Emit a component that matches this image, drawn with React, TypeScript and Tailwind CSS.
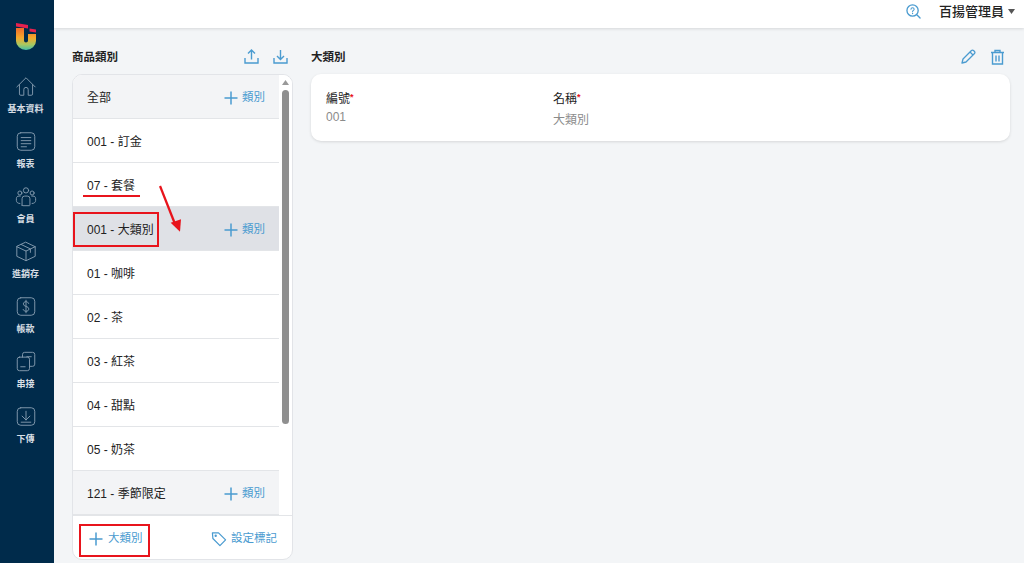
import React from "react";

const font = { fontFamily: '"Liberation Sans","Noto Sans CJK TC",sans-serif' };

function Ico({ children, size = 26, className = "" }: { children: React.ReactNode; size?: number; className?: string }) {
  return (
    <svg width={size} height={size} viewBox="0 0 24 24" fill="none" stroke="currentColor" strokeWidth={1.1} strokeLinecap="round" strokeLinejoin="round" className={className}>
      {children}
    </svg>
  );
}

const nav: { label: string; icon: React.ReactNode }[] = [
  {
    label: "基本資料",
    icon: (
      <>
        <path d="M1.5 12.5 12 2l10.5 10.5" />
        <path d="M4.5 10v10.5a1.5 1.5 0 0 0 1.5 1.5h3.5v-6.5a2.5 2.5 0 0 1 5 0V22H18a1.5 1.5 0 0 0 1.5-1.5V10" />
      </>
    ),
  },
  {
    label: "報表",
    icon: (
      <>
        <rect x="2" y="2" width="20" height="20" rx="4" />
        <path d="M6.5 7.5h11M6.5 11h11M6.5 14.5h11M6.5 18h6" />
      </>
    ),
  },
  {
    label: "會員",
    icon: (
      <>
        <circle cx="12" cy="5" r="3" />
        <circle cx="5" cy="8" r="2.3" />
        <circle cx="19" cy="8" r="2.3" />
        <path d="M7.5 22v-7.5a3 3 0 0 1 3-3h3a3 3 0 0 1 3 3V22a1 1 0 0 1-1 .5h-7a1 1 0 0 1-1-.5Z" />
        <path d="M5 20c-2.5 0-4-1.5-4-3.5v-2c0-1.800 1-3 3-3h1.500M19 20c2.500 0 4-1.500 4-3.500v-2c0-1.800-1-3-3-3h-1.500" />
      </>
    ),
  },
  {
    label: "進銷存",
    icon: (
      <>
        <path d="M12 1.500 22.500 6.500v11L12 22.500 1.500 17.500v-11Z" />
        <path d="M1.500 6.500 12 11.500l10.500-5M12 11.500v11M6.500 4 17 9v4" />
      </>
    ),
  },
  {
    label: "帳款",
    icon: (
      <>
        <rect x="2" y="2" width="20" height="20" rx="4" />
        <path d="M15 8.500c-.5-1.300-1.600-2-3-2-1.800 0-3 1-3 2.600 0 3.600 6.200 2 6.200 5.600 0 1.700-1.300 2.800-3.200 2.800-1.500 0-2.700-.8-3.200-2.100M12 4.800v14.400" />
      </>
    ),
  },
  {
    label: "串接",
    icon: (
      <>
        <path d="M8 7V4a2.500 2.500 0 0 1 2.500-2.500h9A2.500 2.500 0 0 1 22 4v11a2.500 2.500 0 0 1-2.500 2.500H16" />
        <path d="M13 6.500h5M6 18h5" />
        <rect x="2" y="7" width="14" height="15.500" rx="2.500" />
      </>
    ),
  },
  {
    label: "下傳",
    icon: (
      <>
        <rect x="2" y="2" width="20" height="20" rx="4" />
        <path d="M12 6v10M7.500 11.500 12 16l4.500-4.500M6.500 18.500h11" />
      </>
    ),
  },
];

const rows: { t: string; shade?: "soft" | "sel"; add?: boolean }[] = [
  { t: "全部", shade: "soft", add: true },
  { t: "001 - 訂金" },
  { t: "07 - 套餐" },
  { t: "001 - 大類別", shade: "sel", add: true },
  { t: "01 - 咖啡" },
  { t: "02 - 茶" },
  { t: "03 - 紅茶" },
  { t: "04 - 甜點" },
  { t: "05 - 奶茶" },
  { t: "121 - 季節限定", shade: "soft", add: true },
];

function Plus({ size = 14 }: { size?: number }) {
  return (
    <svg width={size} height={size} viewBox="0 0 14 14" fill="none" stroke="currentColor" strokeWidth={1.5}>
      <path d="M7 0.500v13M0.500 7h13" />
    </svg>
  );
}

function Logo() {
  return (
    <svg width="20" height="27" viewBox="0 0 20 27">
      <defs>
        <linearGradient id="lg" x1="0" y1="0" x2="0" y2="1">
          <stop offset="0" stopColor="#f06a2a" />
          <stop offset="0.45" stopColor="#f4a92c" />
          <stop offset="0.75" stopColor="#a8c860" />
          <stop offset="1" stopColor="#45bfa8" />
        </linearGradient>
      </defs>
      <path d="M0 5h8v12.500a2 2 0 0 0 4 0V11h8v7a10 9 0 0 1-20 0Z" fill="url(#lg)" />
      <path d="M0 0 12 2v3.500L0 3.500Z" fill="#e6214f" />
      <path d="M13.500 5.500 20 6.500v3L13.500 8.500Z" fill="#e6214f" />
    </svg>
  );
}

export default function App() {
  return (
    <div style={font} className="flex h-[563px] w-[1024px] overflow-hidden bg-[#f3f5f7] text-[#222]">
      <aside className="flex w-[54px] shrink-0 flex-col items-center bg-[#002b4b] pr-[3px] pt-[23px]">
        <Logo />
        <div className="mt-[26px] flex flex-col items-center gap-[15px]">
          {nav.map((n) => (
            <div key={n.label} className="flex h-[40px] w-[50px] flex-col items-center">
              <Ico size={24} className="text-[#8299ad]">{n.icon}</Ico>
              <span className="mt-[6px] text-[9px] font-bold leading-[13px] text-[#d8dfe5]">{n.label}</span>
            </div>
          ))}
        </div>
      </aside>

      <div className="flex min-w-0 flex-1 flex-col">
        <header className="flex h-[28px] shrink-0 items-center justify-end bg-white pb-[6px] pr-[9px] shadow-[0_1px_3px_rgba(0,0,0,0.12)]">
          <svg width="15" height="15" viewBox="0 0 16 16" fill="none" stroke="#4a9bd0" strokeWidth="1.400" strokeLinecap="round" className="mr-[18px]">
            <circle cx="7" cy="7" r="6" />
            <path d="m11.500 11.500 3.500 3.500" />
            <path d="M5.300 5.600c0-1 .8-1.600 1.700-1.600s1.700.6 1.700 1.500c0 1.300-1.700 1.300-1.700 2.700" strokeWidth="1.100" />
            <path d="M7 10v.1" />
          </svg>
          <span className="text-[13px] font-medium leading-none text-[#222]">百揚管理員</span>
          <svg width="7" height="5" viewBox="0 0 7 5" className="ml-[4px] mt-[1px]"><path d="M0 0h7L3.500 5Z" fill="#555" /></svg>
        </header>

        <main className="flex min-h-0 flex-1 gap-[18px] pb-[3px] pl-[18px] pr-[14px] pt-[16px]">
          <section className="flex w-[221px] shrink-0 flex-col">
            <div className="flex h-[25px] items-center justify-between pr-[5px]">
              <h2 className="pt-[2px] text-[11.500px] font-bold">商品類別</h2>
              <div className="flex gap-[14px] text-[#4a9bd0]">
                <svg width="15" height="15" viewBox="0 0 15 15" fill="none" stroke="currentColor" strokeWidth="1.400">
                  <path d="M7.500 10.500V1M4 4.500 7.500 1 11 4.500M1 9v5h13V9" />
                </svg>
                <svg width="15" height="15" viewBox="0 0 15 15" fill="none" stroke="currentColor" strokeWidth="1.400">
                  <path d="M7.500 1v9.500M4 7 7.500 10.500 11 7M1 9v5h13V9" />
                </svg>
              </div>
            </div>
            <div className="relative mt-[5px] flex min-h-0 flex-1 flex-col overflow-hidden rounded-[10px] border border-[#e2e4e8] bg-white">
              <div className="flex min-h-0 flex-1">
                <div className="min-w-0 flex-1 overflow-hidden">
                  {rows.map((r) => (
                    <div
                      key={r.t}
                      className={`flex h-[44px] items-center justify-between border-b border-[#e3e5e8] pl-[14px] pr-[14px] pt-[2px] text-[12px] ${
                        r.shade === "sel" ? "bg-[#dfe1e6]" : r.shade === "soft" ? "bg-[#f3f4f6]" : "bg-white"
                      }`}
                    >
                      <span>{r.t}</span>
                      {r.add && (
                        <span className="flex items-center gap-[4px] text-[#4a9bd0]">
                          <Plus />
                          <span className="text-[11.500px]">類別</span>
                        </span>
                      )}
                    </div>
                  ))}
                </div>
                <div className="flex w-[13px] shrink-0 flex-col items-center bg-white pt-[5px]">
                  <svg width="7" height="5" viewBox="0 0 7 5"><path d="M3.500 0 7 5H0Z" fill="#999" /></svg>
                  <div className="mt-[5px] h-[334px] w-[7px] shrink-0 rounded-full bg-[#8f8f8f]" />
                </div>
              </div>
              <div className="flex h-[44px] shrink-0 items-center justify-between border-t border-[#e3e5e8] pl-[16px] pr-[15px] pt-[2px] text-[#4a9bd0]">
                <span className="flex items-center gap-[5px]">
                  <Plus />
                  <span className="text-[11.500px]">大類別</span>
                </span>
                <span className="flex items-center gap-[4px]">
                  <svg width="16" height="16" viewBox="0 0 17 17" fill="none" stroke="currentColor" strokeWidth="1.300" strokeLinejoin="round" className="-ml-[1px]">
                    <path d="M1.500 2h6.500l7.500 7.500-6 6L2 8Z" />
                    <circle cx="5" cy="5" r=".6" />
                  </svg>
                  <span className="text-[11.500px]">設定標記</span>
                </span>
              </div>

              <div className="absolute left-[0px] top-[137px] h-[35px] w-[86px] border-2 border-[#e8141c]" />
              <div className="absolute left-[10px] top-[120px] h-[2px] w-[57px] bg-[#e8141c]" />
              <svg width="26" height="50" viewBox="0 0 26 50" className="absolute left-[86px] top-[110px]">
                <path d="M1 1 16 39" stroke="#e8141c" strokeWidth="2.300" />
                <path d="M11.700 37.700 22 34.300 21 46.700Z" fill="#e8141c" />
              </svg>
              <div className="absolute left-[6px] top-[449px] h-[33px] w-[71px] border-2 border-[#e8141c]" />
            </div>
          </section>

          <section className="flex min-w-0 flex-1 flex-col">
            <div className="flex h-[25px] items-center justify-between pr-[5px]">
              <h2 className="pt-[2px] text-[11.500px] font-bold">大類別</h2>
              <div className="flex items-center gap-[14px] text-[#4a9bd0]">
                <svg width="15" height="15" viewBox="0 0 15 15" fill="none" stroke="currentColor" strokeWidth="1.300" strokeLinejoin="round">
                  <path d="M1 14 2 10 10.500 1.500a1.400 1.400 0 0 1 2 0l1 1a1.400 1.400 0 0 1 0 2L5 13Z" />
                  <path d="M9 3l3 3" />
                </svg>
                <svg width="15" height="16" viewBox="0 0 15 16" fill="none" stroke="currentColor" strokeWidth="1.400">
                  <path d="M1 3.500h13M5 3.500V1.500h5v2M2.500 3.500V15h10V3.500M6 6.500v6M9 6.500v6" />
                </svg>
              </div>
            </div>
            <div className="mt-[5px] flex h-[67px] rounded-[10px] bg-white pl-[15px] pt-[18px] shadow-[0_1px_3px_rgba(0,0,0,0.12)]">
              <div className="w-[227px]">
                <div className="flex text-[12px] leading-[14px]">編號<span className="text-[9px] font-bold leading-[10px] text-[#e8141c]">*</span></div>
                <div className="mt-[4px] text-[12px] leading-[14px] text-[#8b8b8b]">001</div>
              </div>
              <div>
                <div className="flex text-[12px] leading-[14px]">名稱<span className="text-[9px] font-bold leading-[10px] text-[#e8141c]">*</span></div>
                <div className="mt-[7px] text-[12px] leading-[14px] text-[#8b8b8b]">大類別</div>
              </div>
            </div>
          </section>
        </main>
      </div>
    </div>
  );
}
